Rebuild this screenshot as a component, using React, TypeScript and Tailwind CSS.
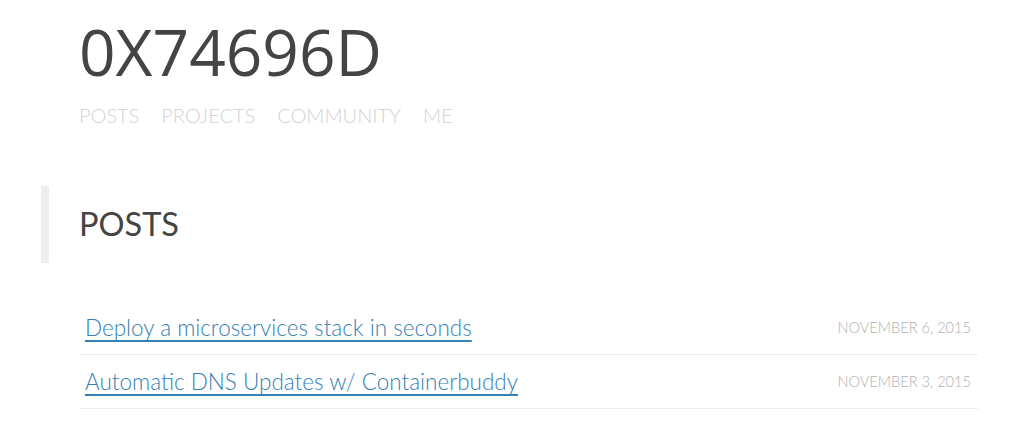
export default function App() {
  const posts = [
    { title: "Deploy a microservices stack in seconds", date: "NOVEMBER 6, 2015" },
    { title: "Automatic DNS Updates w/ Containerbuddy", date: "NOVEMBER 3, 2015" },
  ];
  const nav = ["POSTS", "PROJECTS", "COMMUNITY", "ME"];
  const light = { fontFamily: "'Lato Light', Lato, sans-serif", fontWeight: 300 };

  return (
    <div className="min-h-screen bg-white" style={{ fontFamily: "Lato, 'Open Sans', sans-serif" }}>
      <header className="pl-[79px] pt-[16px]">
        <h1
          className="text-[64px] leading-[72px] text-[#444]"
          style={{ fontFamily: "'Open Sans', 'Noto Sans', sans-serif" }}
        >
          0X74696D
        </h1>
        <nav className="flex gap-[22px] mt-[14px] text-[20px] leading-[26px] text-[#d2d2d2]" style={light}>
          {nav.map((n) => (
            <a key={n} href="#">{n}</a>
          ))}
        </nav>
      </header>

      <section className="mt-[58px] ml-[41px] border-l-[8px] border-[#eee] h-[77px] flex items-center pl-[30px]">
        <h2 className="text-[32.5px] text-[#444] leading-none">POSTS</h2>
      </section>

      <ul className="ml-[79px] w-[899px] mt-[38px]">
        {posts.map((p) => (
          <li key={p.title} className="flex items-center justify-between h-[54px] border-b border-[#eee] pl-[6px] pr-[7px]">
            <a href="#" className="text-[22.5px] text-[#3580b4] underline decoration-2 underline-offset-[4px]" style={light}>
              {p.title}
            </a>
            <span className="text-[14.6px] text-[#b0b0b0]" style={light}>{p.date}</span>
          </li>
        ))}
      </ul>
    </div>
  );
}
